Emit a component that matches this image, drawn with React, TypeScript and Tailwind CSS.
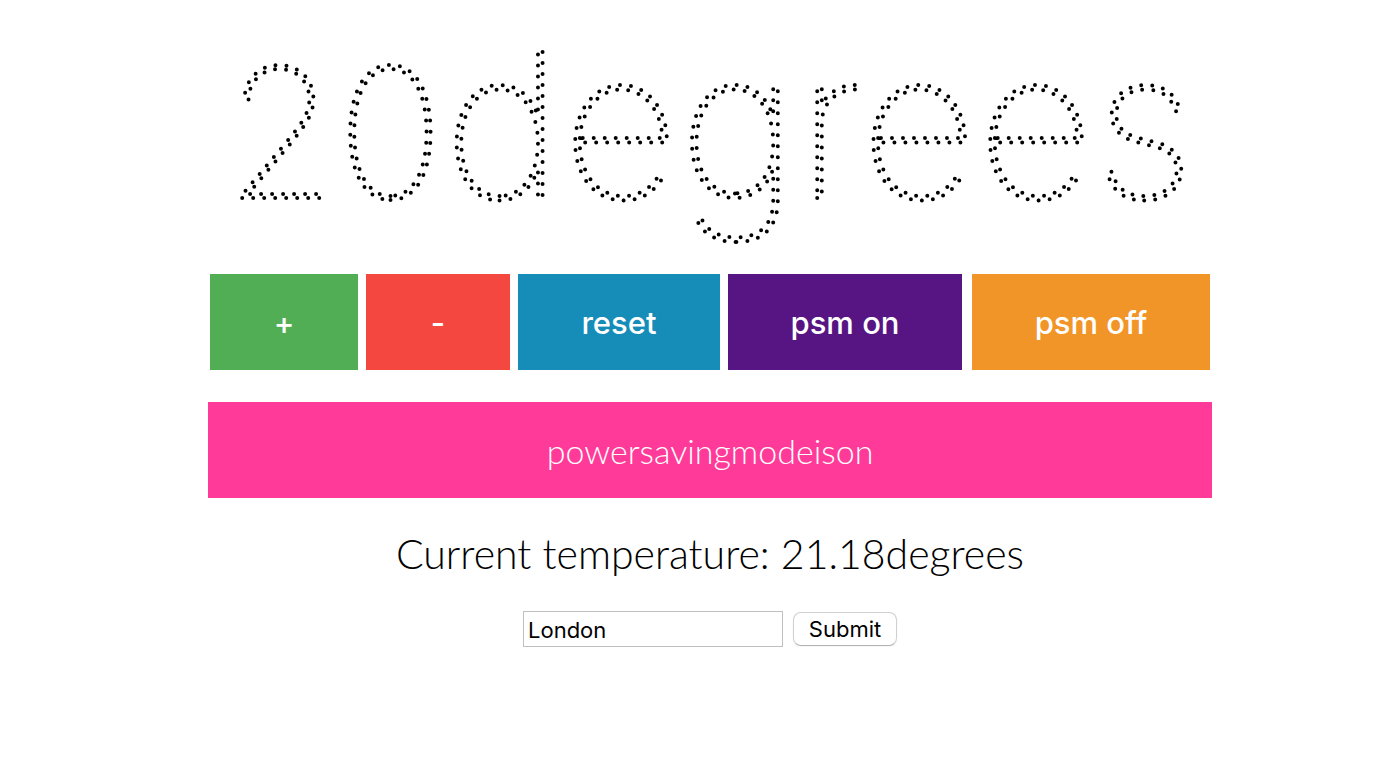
import { useState } from "react";

const actions = [
  { label: "+", className: "w-[148px] bg-[#52ae55]" },
  { label: "-", className: "w-[144px] bg-[#f4473f]" },
  { label: "reset", className: "w-[202px] bg-[#168cb8]" },
  { label: "psm on", className: "w-[234px] bg-[#561583]" },
  { label: "psm off", className: "ml-auto w-[238px] bg-[#f29528]" },
];

export default function App() {
  const [city, setCity] = useState("London");

  return (
    <main className="flex flex-col items-center bg-white pl-[34px] font-['Lato',sans-serif] text-black">
      <div className="flex w-full max-w-[1004px] flex-col items-center">
        <h1 className="w-full">
          <svg viewBox="0 0 1004 274" className="block w-full overflow-visible">
            <text
              x="502"
              y="198"
              textAnchor="middle"
              fill="none"
              stroke="black"
              strokeWidth="4"
              strokeLinecap="round"
              strokeDasharray="0 11"
              className="font-['Inter',sans-serif] text-[204px] font-thin"
            >
              <tspan className="text-[180px]">20</tspan>degrees
            </text>
          </svg>
        </h1>

        <div className="flex w-full gap-2 px-0.5">
          {actions.map((action) => (
            <button
              key={action.label}
              type="button"
              className={`h-24 pt-0.5 font-['Inter',sans-serif] text-[31px] font-medium text-white ${action.className}`}
            >
              {action.label}
            </button>
          ))}
        </div>

        <p className="mt-8 flex h-24 w-full items-center justify-center bg-[#ff3a98] text-[34px] font-light text-white">
          powersavingmodeison
        </p>

        <h2 className="mt-8 text-[41px] leading-[48px] font-light">
          Current temperature: 21.18degrees
        </h2>

        <form
          className="mt-[33px] flex items-center gap-2.5 font-['Inter',sans-serif] text-[22px]"
          onSubmit={(event) => event.preventDefault()}
        >
          <input
            type="text"
            aria-label="City"
            value={city}
            onChange={(event) => setCity(event.target.value)}
            className="h-9 w-[260px] border border-[#bfbfbf] bg-white px-1 pt-0.5"
          />
          <button
            type="submit"
            className="h-[34px] w-[104px] rounded-lg border border-[#d0d0d0] border-b-[#b4b4b4] bg-white shadow-xs"
          >
            Submit
          </button>
        </form>
      </div>
    </main>
  );
}
